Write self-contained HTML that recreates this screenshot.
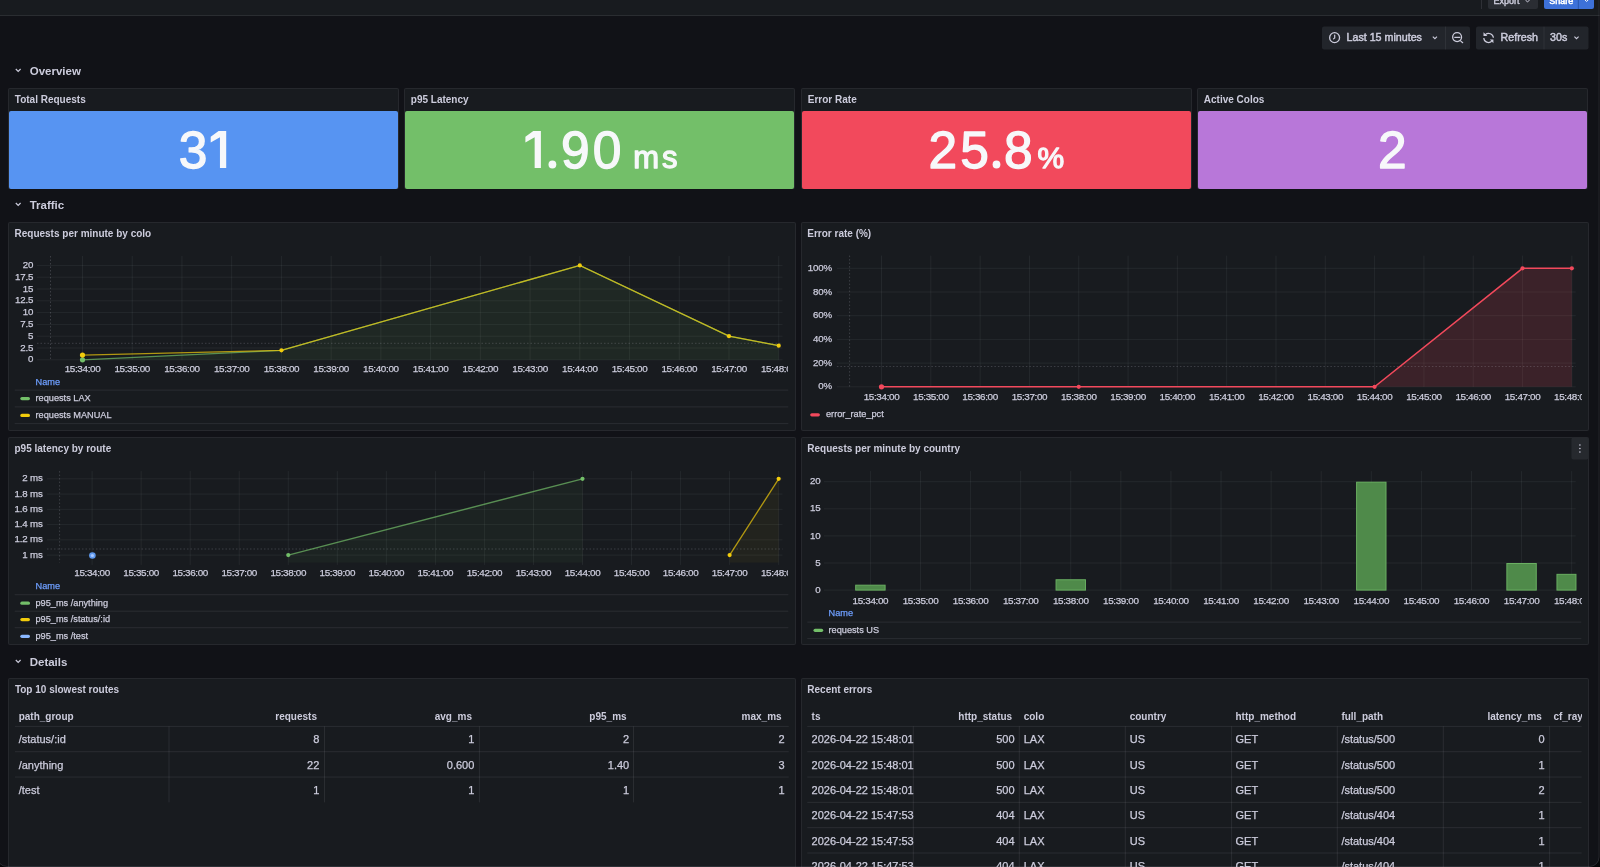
<!DOCTYPE html><html><head><meta charset="utf-8"><title>Grafana dashboard</title><style>

html,body{margin:0;padding:0;width:1600px;height:867px;overflow:hidden;background:#111217;font-family:"Liberation Sans", sans-serif;color:#ccccdc}
.panel{position:absolute;box-sizing:border-box;background:#181b1f;border:1px solid rgba(204,204,220,0.08);border-radius:2px}
svg{will-change:transform} svg text{font-family:"Liberation Sans", sans-serif}
.topbar{position:absolute;left:0;top:0;width:1600px;height:15px;background:#181b1f;border-bottom:1px solid rgba(204,204,220,0.10)}
.stat{position:absolute;box-sizing:border-box;border-radius:2px;overflow:hidden}

</style></head><body>
<div class="topbar"></div>
<svg style="position:absolute;left:0px;top:0px" width="1600" height="85" viewBox="0 0 1600 85">
<rect x="1481" y="0" width="1" height="9" fill="rgba(204,204,220,0.12)"/>
<rect x="1488" y="-4" width="50" height="13" rx="2" fill="#2a2d33"/>
<text x="1493.5" y="3.6" font-size="9" fill="#ccccdc" stroke="#ccccdc" stroke-width="0.4">Export</text>
<path d="M1525.3 -0.2 l2.2 2.2 l2.2 -2.2" stroke="#ccccdc" stroke-width="1" fill="none"/>
<rect x="1544" y="-4" width="50" height="13" rx="2" fill="#3d71d9"/>
<rect x="1577.8" y="-4" width="1.2" height="13" fill="#2c5ab5"/>
<text x="1549.3" y="3.6" font-size="9" fill="#ffffff" stroke="#ffffff" stroke-width="0.5">Share</text>
<path d="M1584.6 -0.5 l2 2 l2 -2" stroke="#ffffff" stroke-width="1" fill="none"/>
<rect x="1322" y="26.5" width="148" height="23" rx="2" fill="#22252b"/>
<rect x="1445" y="26.5" width="1" height="23" fill="rgba(204,204,220,0.08)"/>
<circle cx="1334.6" cy="37.65" r="4.95" stroke="#ccccdc" stroke-width="1.3" fill="none"/>
<path d="M1334.7 35 V37.9 L1333.5 38.9" stroke="#ccccdc" stroke-width="1.2" fill="none" stroke-linecap="round"/>
<text x="1346.5" y="41.2" font-size="10.7" fill="#ccccdc" stroke="#ccccdc" stroke-width="0.45">Last 15 minutes</text>
<path d="M1432.8 36.6 l2.1 2.1 l2.1 -2.1" stroke="#ccccdc" stroke-width="1.1" fill="none"/>
<circle cx="1457.1" cy="37.1" r="4.45" stroke="#ccccdc" stroke-width="1.3" fill="none"/>
<path d="M1454.8 37.4 h5 M1460.6 40.9 l2.1 1.8" stroke="#ccccdc" stroke-width="1.2" fill="none" stroke-linecap="round"/>
<rect x="1476" y="26.5" width="112.5" height="23" rx="2" fill="#22252b"/>
<rect x="1543.5" y="26.5" width="1" height="23" fill="rgba(204,204,220,0.08)"/>
<path d="M1485.4 34.6 A4.8 4.8 0 0 1 1493.4 37.8 M1483.8 37.9 A4.8 4.8 0 0 0 1491.8 41.3" stroke="#ccccdc" stroke-width="1.2" fill="none"/>
<path d="M1483.5 32.2 V36.1 H1487.4 Z M1493.4 43.3 V39.4 H1489.9 Z" fill="#ccccdc"/>
<text x="1500.5" y="41.2" font-size="10.7" fill="#ccccdc" stroke="#ccccdc" stroke-width="0.45">Refresh</text>
<text x="1550" y="41.2" font-size="10.7" fill="#ccccdc" stroke="#ccccdc" stroke-width="0.45">30s</text>
<path d="M1574.4 36.6 l2.1 2.1 l2.1 -2.1" stroke="#ccccdc" stroke-width="1.1" fill="none"/>
<path d="M15.8 69 l2.4 2.4 l2.4 -2.4" stroke="#ccccdc" stroke-width="1.2" fill="none"/>
<text x="29.7" y="74.9" font-size="11.5" font-weight="700" fill="#ccccdc">Overview</text>
</svg>
<div class="panel" style="left:8px;top:88px;width:391px;height:101px"></div>
<div class="stat" style="left:9px;top:110.5px;width:389px;height:78px;background:#5794f2"></div>
<div class="panel" style="left:404px;top:88px;width:391px;height:101px"></div>
<div class="stat" style="left:405px;top:110.5px;width:389px;height:78px;background:#73bf69"></div>
<div class="panel" style="left:801px;top:88px;width:391px;height:101px"></div>
<div class="stat" style="left:802px;top:110.5px;width:389px;height:78px;background:#f2495c"></div>
<div class="panel" style="left:1197px;top:88px;width:391px;height:101px"></div>
<div class="stat" style="left:1198px;top:110.5px;width:389px;height:78px;background:#b877d9"></div>
<svg style="position:absolute;left:0px;top:80px" width="1600" height="140" viewBox="0 80 1600 140">
<text x="14.8" y="103" font-size="10" font-weight="700" fill="#ccccdc">Total Requests</text>
<text x="410.8" y="103" font-size="10" font-weight="700" fill="#ccccdc">p95 Latency</text>
<text x="807.8" y="103" font-size="10" font-weight="700" fill="#ccccdc">Error Rate</text>
<text x="1203.8" y="103" font-size="10" font-weight="700" fill="#ccccdc">Active Colos</text>
<text x="178.69" y="167.6" font-size="51.5" fill="#f7f8fa" stroke="#f7f8fa" stroke-width="1.3" stroke-linejoin="round">3</text>
<polygon points="218.60,130.9 226.20,130.9 226.20,168.1 219.95,168.1 219.95,137.2 210.70,142.6 210.70,136.7" fill="#f7f8fa"/>
<polygon points="533.30,130.9 540.90,130.9 540.90,168.1 534.65,168.1 534.65,137.2 525.40,142.6 525.40,136.7" fill="#f7f8fa"/>
<text x="561.04 592.84" y="167.6" font-size="51.5" fill="#f7f8fa" stroke="#f7f8fa" stroke-width="1.3" stroke-linejoin="round">90</text>
<circle cx="552.4" cy="164.5" r="3.9" fill="#f7f8fa"/>
<text x="633.19 661.99" y="167.6" font-size="31" fill="#f7f8fa" stroke="#f7f8fa" stroke-width="1.3" stroke-linejoin="round">ms</text>
<text x="928.46 960.19 1004.01" y="167.6" font-size="51.5" fill="#f7f8fa" stroke="#f7f8fa" stroke-width="1.3" stroke-linejoin="round">258</text>
<circle cx="996.5" cy="164.5" r="3.9" fill="#f7f8fa"/>
<text x="1037.48" y="167.6" font-size="30" fill="#f7f8fa" stroke="#f7f8fa" stroke-width="1.3" stroke-linejoin="round">%</text>
<text x="1378.06" y="167.6" font-size="51.5" fill="#f7f8fa" stroke="#f7f8fa" stroke-width="1.3" stroke-linejoin="round">2</text>
<path d="M15.8 203 l2.4 2.4 l2.4 -2.4" stroke="#ccccdc" stroke-width="1.2" fill="none"/>
<text x="29.7" y="208.5" font-size="11.5" font-weight="700" fill="#ccccdc">Traffic</text>
</svg>
<div class="panel" style="left:8px;top:222px;width:787.5px;height:209px"></div>
<svg style="position:absolute;left:8px;top:222px" width="787.5" height="209" viewBox="8 222 787.5 209">
<text x="14.5" y="237" font-size="10" font-weight="700" fill="#ccccdc">Requests per minute by colo</text>
<rect x="37" y="359.3" width="745.5" height="1" fill="rgba(240,250,255,0.06)"/>
<text x="33.3" y="362.4" font-size="9.7" text-anchor="end" letter-spacing="-0.15" fill="#ccccdc" stroke="#ccccdc" stroke-width="0.25">0</text>
<rect x="37" y="347.5" width="745.5" height="1" fill="rgba(240,250,255,0.06)"/>
<text x="33.3" y="350.6" font-size="9.7" text-anchor="end" letter-spacing="-0.15" fill="#ccccdc" stroke="#ccccdc" stroke-width="0.25">2.5</text>
<rect x="37" y="335.7" width="745.5" height="1" fill="rgba(240,250,255,0.06)"/>
<text x="33.3" y="338.8" font-size="9.7" text-anchor="end" letter-spacing="-0.15" fill="#ccccdc" stroke="#ccccdc" stroke-width="0.25">5</text>
<rect x="37" y="323.9" width="745.5" height="1" fill="rgba(240,250,255,0.06)"/>
<text x="33.3" y="327.0" font-size="9.7" text-anchor="end" letter-spacing="-0.15" fill="#ccccdc" stroke="#ccccdc" stroke-width="0.25">7.5</text>
<rect x="37" y="312.1" width="745.5" height="1" fill="rgba(240,250,255,0.06)"/>
<text x="33.3" y="315.2" font-size="9.7" text-anchor="end" letter-spacing="-0.15" fill="#ccccdc" stroke="#ccccdc" stroke-width="0.25">10</text>
<rect x="37" y="300.3" width="745.5" height="1" fill="rgba(240,250,255,0.06)"/>
<text x="33.3" y="303.4" font-size="9.7" text-anchor="end" letter-spacing="-0.15" fill="#ccccdc" stroke="#ccccdc" stroke-width="0.25">12.5</text>
<rect x="37" y="288.5" width="745.5" height="1" fill="rgba(240,250,255,0.06)"/>
<text x="33.3" y="291.6" font-size="9.7" text-anchor="end" letter-spacing="-0.15" fill="#ccccdc" stroke="#ccccdc" stroke-width="0.25">15</text>
<rect x="37" y="276.7" width="745.5" height="1" fill="rgba(240,250,255,0.06)"/>
<text x="33.3" y="279.8" font-size="9.7" text-anchor="end" letter-spacing="-0.15" fill="#ccccdc" stroke="#ccccdc" stroke-width="0.25">17.5</text>
<rect x="37" y="264.9" width="745.5" height="1" fill="rgba(240,250,255,0.06)"/>
<text x="33.3" y="268.0" font-size="9.7" text-anchor="end" letter-spacing="-0.15" fill="#ccccdc" stroke="#ccccdc" stroke-width="0.25">20</text>
<rect x="82.0" y="256" width="1" height="103.80000000000001" fill="rgba(240,250,255,0.06)"/>
<rect x="131.73" y="256" width="1" height="103.80000000000001" fill="rgba(240,250,255,0.06)"/>
<rect x="181.45999999999998" y="256" width="1" height="103.80000000000001" fill="rgba(240,250,255,0.06)"/>
<rect x="231.19" y="256" width="1" height="103.80000000000001" fill="rgba(240,250,255,0.06)"/>
<rect x="280.91999999999996" y="256" width="1" height="103.80000000000001" fill="rgba(240,250,255,0.06)"/>
<rect x="330.65" y="256" width="1" height="103.80000000000001" fill="rgba(240,250,255,0.06)"/>
<rect x="380.38" y="256" width="1" height="103.80000000000001" fill="rgba(240,250,255,0.06)"/>
<rect x="430.10999999999996" y="256" width="1" height="103.80000000000001" fill="rgba(240,250,255,0.06)"/>
<rect x="479.84" y="256" width="1" height="103.80000000000001" fill="rgba(240,250,255,0.06)"/>
<rect x="529.5699999999999" y="256" width="1" height="103.80000000000001" fill="rgba(240,250,255,0.06)"/>
<rect x="579.3" y="256" width="1" height="103.80000000000001" fill="rgba(240,250,255,0.06)"/>
<rect x="629.03" y="256" width="1" height="103.80000000000001" fill="rgba(240,250,255,0.06)"/>
<rect x="678.76" y="256" width="1" height="103.80000000000001" fill="rgba(240,250,255,0.06)"/>
<rect x="728.49" y="256" width="1" height="103.80000000000001" fill="rgba(240,250,255,0.06)"/>
<rect x="778.2199999999999" y="256" width="1" height="103.80000000000001" fill="rgba(240,250,255,0.06)"/>
<polygon points="82.50,359.8 82.50,359.80 281.42,350.36 579.80,265.40 728.99,336.20 778.72,345.64 778.72,359.8" fill="#73bf69" fill-opacity="0.085"/>
<polygon points="82.50,359.8 82.50,355.08 281.42,350.36 579.80,265.40 728.99,336.20 778.72,345.64 778.72,359.8" fill="#f2cc0c" fill-opacity="0.005"/>
<path d="M50.5 256 V359.8" stroke="rgba(204,204,220,0.2)" stroke-width="1" stroke-dasharray="1.5 2" fill="none"/><path d="M37 343.3 H782.5" stroke="rgba(204,204,220,0.2)" stroke-width="1" stroke-dasharray="1.5 2" fill="none"/>
<polyline points="82.50,359.80 281.42,350.36 579.80,265.40 728.99,336.20 778.72,345.64" stroke="#73bf69" stroke-width="1.3" stroke-opacity="0.7" fill="none"/>
<polyline points="82.50,355.08 281.42,350.36 579.80,265.40 728.99,336.20 778.72,345.64" stroke="#f2cc0c" stroke-width="1.3" stroke-opacity="0.7" fill="none"/>
<circle cx="82.5" cy="359.80" r="2.6" fill="#73bf69"/>
<circle cx="82.5" cy="355.08" r="2.6" fill="#f2cc0c"/>
<circle cx="281.42" cy="350.36" r="2.1" fill="#f2cc0c"/>
<circle cx="579.80" cy="265.40" r="2.1" fill="#f2cc0c"/>
<circle cx="728.99" cy="336.20" r="2.1" fill="#f2cc0c"/>
<circle cx="778.72" cy="345.64" r="2.1" fill="#f2cc0c"/>
<clipPath id="cl1"><rect x="0" y="0" width="788" height="2000"/></clipPath>
<g clip-path="url(#cl1)">
<text x="82.5" y="372.3" font-size="9.9" text-anchor="middle" letter-spacing="-0.36" fill="#ccccdc" stroke="#ccccdc" stroke-width="0.25">15:34:00</text>
<text x="132.23" y="372.3" font-size="9.9" text-anchor="middle" letter-spacing="-0.36" fill="#ccccdc" stroke="#ccccdc" stroke-width="0.25">15:35:00</text>
<text x="181.96" y="372.3" font-size="9.9" text-anchor="middle" letter-spacing="-0.36" fill="#ccccdc" stroke="#ccccdc" stroke-width="0.25">15:36:00</text>
<text x="231.69" y="372.3" font-size="9.9" text-anchor="middle" letter-spacing="-0.36" fill="#ccccdc" stroke="#ccccdc" stroke-width="0.25">15:37:00</text>
<text x="281.42" y="372.3" font-size="9.9" text-anchor="middle" letter-spacing="-0.36" fill="#ccccdc" stroke="#ccccdc" stroke-width="0.25">15:38:00</text>
<text x="331.15" y="372.3" font-size="9.9" text-anchor="middle" letter-spacing="-0.36" fill="#ccccdc" stroke="#ccccdc" stroke-width="0.25">15:39:00</text>
<text x="380.88" y="372.3" font-size="9.9" text-anchor="middle" letter-spacing="-0.36" fill="#ccccdc" stroke="#ccccdc" stroke-width="0.25">15:40:00</text>
<text x="430.61" y="372.3" font-size="9.9" text-anchor="middle" letter-spacing="-0.36" fill="#ccccdc" stroke="#ccccdc" stroke-width="0.25">15:41:00</text>
<text x="480.34" y="372.3" font-size="9.9" text-anchor="middle" letter-spacing="-0.36" fill="#ccccdc" stroke="#ccccdc" stroke-width="0.25">15:42:00</text>
<text x="530.07" y="372.3" font-size="9.9" text-anchor="middle" letter-spacing="-0.36" fill="#ccccdc" stroke="#ccccdc" stroke-width="0.25">15:43:00</text>
<text x="579.8" y="372.3" font-size="9.9" text-anchor="middle" letter-spacing="-0.36" fill="#ccccdc" stroke="#ccccdc" stroke-width="0.25">15:44:00</text>
<text x="629.53" y="372.3" font-size="9.9" text-anchor="middle" letter-spacing="-0.36" fill="#ccccdc" stroke="#ccccdc" stroke-width="0.25">15:45:00</text>
<text x="679.26" y="372.3" font-size="9.9" text-anchor="middle" letter-spacing="-0.36" fill="#ccccdc" stroke="#ccccdc" stroke-width="0.25">15:46:00</text>
<text x="728.99" y="372.3" font-size="9.9" text-anchor="middle" letter-spacing="-0.36" fill="#ccccdc" stroke="#ccccdc" stroke-width="0.25">15:47:00</text>
<text x="778.72" y="372.3" font-size="9.9" text-anchor="middle" letter-spacing="-0.36" fill="#ccccdc" stroke="#ccccdc" stroke-width="0.25">15:48:00</text>
</g>
<text x="35.5" y="384.8" font-size="9.2" fill="#6e9fff" stroke="#6e9fff" stroke-width="0.25">Name</text>
<rect x="14.7" y="389.6" width="773.5999999999999" height="1" fill="rgba(204,204,220,0.10)"/>
<rect x="14.7" y="406.4" width="773.5999999999999" height="1" fill="rgba(204,204,220,0.10)"/>
<rect x="14.7" y="423.1" width="773.5999999999999" height="1" fill="rgba(204,204,220,0.10)"/>
<rect x="20.3" y="397.0" width="9.7" height="3.2" rx="1.6" fill="#73bf69"/>
<text x="35.5" y="401.0" font-size="9.2" fill="#ccccdc" stroke="#ccccdc" stroke-width="0.25">requests LAX</text>
<rect x="20.3" y="413.8" width="9.7" height="3.2" rx="1.6" fill="#f2cc0c"/>
<text x="35.5" y="417.8" font-size="9.2" fill="#ccccdc" stroke="#ccccdc" stroke-width="0.25">requests MANUAL</text>
</svg>
<div class="panel" style="left:801px;top:222px;width:787.5px;height:209px"></div>
<svg style="position:absolute;left:801px;top:222px" width="787.5" height="209" viewBox="801 222 787.5 209">
<text x="807.3" y="237" font-size="10" font-weight="700" fill="#ccccdc">Error rate (%)</text>
<rect x="836.9" y="386.3" width="738.8000000000001" height="1" fill="rgba(240,250,255,0.06)"/>
<text x="832" y="389.4" font-size="9.7" text-anchor="end" letter-spacing="-0.15" fill="#ccccdc" stroke="#ccccdc" stroke-width="0.25">0%</text>
<rect x="836.9" y="362.6" width="738.8000000000001" height="1" fill="rgba(240,250,255,0.06)"/>
<text x="832" y="365.7" font-size="9.7" text-anchor="end" letter-spacing="-0.15" fill="#ccccdc" stroke="#ccccdc" stroke-width="0.25">20%</text>
<rect x="836.9" y="338.90000000000003" width="738.8000000000001" height="1" fill="rgba(240,250,255,0.06)"/>
<text x="832" y="342.0" font-size="9.7" text-anchor="end" letter-spacing="-0.15" fill="#ccccdc" stroke="#ccccdc" stroke-width="0.25">40%</text>
<rect x="836.9" y="315.20000000000005" width="738.8000000000001" height="1" fill="rgba(240,250,255,0.06)"/>
<text x="832" y="318.3" font-size="9.7" text-anchor="end" letter-spacing="-0.15" fill="#ccccdc" stroke="#ccccdc" stroke-width="0.25">60%</text>
<rect x="836.9" y="291.5" width="738.8000000000001" height="1" fill="rgba(240,250,255,0.06)"/>
<text x="832" y="294.6" font-size="9.7" text-anchor="end" letter-spacing="-0.15" fill="#ccccdc" stroke="#ccccdc" stroke-width="0.25">80%</text>
<rect x="836.9" y="267.8" width="738.8000000000001" height="1" fill="rgba(240,250,255,0.06)"/>
<text x="832" y="270.9" font-size="9.7" text-anchor="end" letter-spacing="-0.15" fill="#ccccdc" stroke="#ccccdc" stroke-width="0.25">100%</text>
<rect x="881.0" y="255.6" width="1" height="131.20000000000002" fill="rgba(240,250,255,0.06)"/>
<rect x="930.31" y="255.6" width="1" height="131.20000000000002" fill="rgba(240,250,255,0.06)"/>
<rect x="979.62" y="255.6" width="1" height="131.20000000000002" fill="rgba(240,250,255,0.06)"/>
<rect x="1028.93" y="255.6" width="1" height="131.20000000000002" fill="rgba(240,250,255,0.06)"/>
<rect x="1078.24" y="255.6" width="1" height="131.20000000000002" fill="rgba(240,250,255,0.06)"/>
<rect x="1127.55" y="255.6" width="1" height="131.20000000000002" fill="rgba(240,250,255,0.06)"/>
<rect x="1176.8600000000001" y="255.6" width="1" height="131.20000000000002" fill="rgba(240,250,255,0.06)"/>
<rect x="1226.17" y="255.6" width="1" height="131.20000000000002" fill="rgba(240,250,255,0.06)"/>
<rect x="1275.48" y="255.6" width="1" height="131.20000000000002" fill="rgba(240,250,255,0.06)"/>
<rect x="1324.79" y="255.6" width="1" height="131.20000000000002" fill="rgba(240,250,255,0.06)"/>
<rect x="1374.1" y="255.6" width="1" height="131.20000000000002" fill="rgba(240,250,255,0.06)"/>
<rect x="1423.41" y="255.6" width="1" height="131.20000000000002" fill="rgba(240,250,255,0.06)"/>
<rect x="1472.72" y="255.6" width="1" height="131.20000000000002" fill="rgba(240,250,255,0.06)"/>
<rect x="1522.03" y="255.6" width="1" height="131.20000000000002" fill="rgba(240,250,255,0.06)"/>
<rect x="1571.3400000000001" y="255.6" width="1" height="131.20000000000002" fill="rgba(240,250,255,0.06)"/>
<polygon points="881.50,386.8 881.50,386.80 1078.74,386.80 1374.60,386.80 1522.53,268.30 1571.84,268.30 1571.84,386.8" fill="#f2495c" fill-opacity="0.16"/>
<path d="M849.6 255.6 V386.8" stroke="rgba(204,204,220,0.2)" stroke-width="1" stroke-dasharray="1.5 2" fill="none"/><path d="M836.9 366.5 H1575.7" stroke="rgba(204,204,220,0.2)" stroke-width="1" stroke-dasharray="1.5 2" fill="none"/>
<polyline points="881.50,386.80 1078.74,386.80 1374.60,386.80 1522.53,268.30 1571.84,268.30" stroke="#f2495c" stroke-width="1.5" fill="none"/>
<circle cx="881.50" cy="386.80" r="2.6" fill="#f2495c"/>
<circle cx="1078.74" cy="386.80" r="2.1" fill="#f2495c"/>
<circle cx="1374.60" cy="386.80" r="2.1" fill="#f2495c"/>
<circle cx="1522.53" cy="268.30" r="2.1" fill="#f2495c"/>
<circle cx="1571.84" cy="268.30" r="2.1" fill="#f2495c"/>
<clipPath id="cl2"><rect x="0" y="0" width="1582" height="2000"/></clipPath>
<g clip-path="url(#cl2)">
<text x="881.5" y="400.0" font-size="9.9" text-anchor="middle" letter-spacing="-0.36" fill="#ccccdc" stroke="#ccccdc" stroke-width="0.25">15:34:00</text>
<text x="930.81" y="400.0" font-size="9.9" text-anchor="middle" letter-spacing="-0.36" fill="#ccccdc" stroke="#ccccdc" stroke-width="0.25">15:35:00</text>
<text x="980.12" y="400.0" font-size="9.9" text-anchor="middle" letter-spacing="-0.36" fill="#ccccdc" stroke="#ccccdc" stroke-width="0.25">15:36:00</text>
<text x="1029.43" y="400.0" font-size="9.9" text-anchor="middle" letter-spacing="-0.36" fill="#ccccdc" stroke="#ccccdc" stroke-width="0.25">15:37:00</text>
<text x="1078.74" y="400.0" font-size="9.9" text-anchor="middle" letter-spacing="-0.36" fill="#ccccdc" stroke="#ccccdc" stroke-width="0.25">15:38:00</text>
<text x="1128.05" y="400.0" font-size="9.9" text-anchor="middle" letter-spacing="-0.36" fill="#ccccdc" stroke="#ccccdc" stroke-width="0.25">15:39:00</text>
<text x="1177.36" y="400.0" font-size="9.9" text-anchor="middle" letter-spacing="-0.36" fill="#ccccdc" stroke="#ccccdc" stroke-width="0.25">15:40:00</text>
<text x="1226.67" y="400.0" font-size="9.9" text-anchor="middle" letter-spacing="-0.36" fill="#ccccdc" stroke="#ccccdc" stroke-width="0.25">15:41:00</text>
<text x="1275.98" y="400.0" font-size="9.9" text-anchor="middle" letter-spacing="-0.36" fill="#ccccdc" stroke="#ccccdc" stroke-width="0.25">15:42:00</text>
<text x="1325.29" y="400.0" font-size="9.9" text-anchor="middle" letter-spacing="-0.36" fill="#ccccdc" stroke="#ccccdc" stroke-width="0.25">15:43:00</text>
<text x="1374.6" y="400.0" font-size="9.9" text-anchor="middle" letter-spacing="-0.36" fill="#ccccdc" stroke="#ccccdc" stroke-width="0.25">15:44:00</text>
<text x="1423.91" y="400.0" font-size="9.9" text-anchor="middle" letter-spacing="-0.36" fill="#ccccdc" stroke="#ccccdc" stroke-width="0.25">15:45:00</text>
<text x="1473.22" y="400.0" font-size="9.9" text-anchor="middle" letter-spacing="-0.36" fill="#ccccdc" stroke="#ccccdc" stroke-width="0.25">15:46:00</text>
<text x="1522.53" y="400.0" font-size="9.9" text-anchor="middle" letter-spacing="-0.36" fill="#ccccdc" stroke="#ccccdc" stroke-width="0.25">15:47:00</text>
<text x="1571.84" y="400.0" font-size="9.9" text-anchor="middle" letter-spacing="-0.36" fill="#ccccdc" stroke="#ccccdc" stroke-width="0.25">15:48:00</text>
</g>
<rect x="810.2" y="413.2" width="9.7" height="3.2" rx="1.6" fill="#f2495c"/>
<text x="826" y="417.2" font-size="9.2" fill="#ccccdc" stroke="#ccccdc" stroke-width="0.25">error_rate_pct</text>
</svg>
<div class="panel" style="left:8px;top:436.5px;width:787.5px;height:208.5px"></div>
<svg style="position:absolute;left:8px;top:436.5px" width="787.5" height="209" viewBox="8 436.5 787.5 209">
<text x="14.5" y="451.8" font-size="10" font-weight="700" fill="#ccccdc">p95 latency by route</text>
<rect x="47" y="554.1" width="735.5" height="1" fill="rgba(240,250,255,0.06)"/>
<text x="42.6" y="557.2" font-size="9.7" text-anchor="end" letter-spacing="-0.15" fill="#ccccdc" stroke="#ccccdc" stroke-width="0.25">1 ms</text>
<rect x="47" y="538.84" width="735.5" height="1" fill="rgba(240,250,255,0.06)"/>
<text x="42.6" y="541.94" font-size="9.7" text-anchor="end" letter-spacing="-0.15" fill="#ccccdc" stroke="#ccccdc" stroke-width="0.25">1.2 ms</text>
<rect x="47" y="523.58" width="735.5" height="1" fill="rgba(240,250,255,0.06)"/>
<text x="42.6" y="526.68" font-size="9.7" text-anchor="end" letter-spacing="-0.15" fill="#ccccdc" stroke="#ccccdc" stroke-width="0.25">1.4 ms</text>
<rect x="47" y="508.32000000000005" width="735.5" height="1" fill="rgba(240,250,255,0.06)"/>
<text x="42.6" y="511.42" font-size="9.7" text-anchor="end" letter-spacing="-0.15" fill="#ccccdc" stroke="#ccccdc" stroke-width="0.25">1.6 ms</text>
<rect x="47" y="493.06" width="735.5" height="1" fill="rgba(240,250,255,0.06)"/>
<text x="42.6" y="496.16" font-size="9.7" text-anchor="end" letter-spacing="-0.15" fill="#ccccdc" stroke="#ccccdc" stroke-width="0.25">1.8 ms</text>
<rect x="47" y="477.8" width="735.5" height="1" fill="rgba(240,250,255,0.06)"/>
<text x="42.6" y="480.9" font-size="9.7" text-anchor="end" letter-spacing="-0.15" fill="#ccccdc" stroke="#ccccdc" stroke-width="0.25">2 ms</text>
<rect x="91.6" y="470.6" width="1" height="93.79999999999995" fill="rgba(240,250,255,0.06)"/>
<rect x="140.64" y="470.6" width="1" height="93.79999999999995" fill="rgba(240,250,255,0.06)"/>
<rect x="189.68" y="470.6" width="1" height="93.79999999999995" fill="rgba(240,250,255,0.06)"/>
<rect x="238.72" y="470.6" width="1" height="93.79999999999995" fill="rgba(240,250,255,0.06)"/>
<rect x="287.76" y="470.6" width="1" height="93.79999999999995" fill="rgba(240,250,255,0.06)"/>
<rect x="336.79999999999995" y="470.6" width="1" height="93.79999999999995" fill="rgba(240,250,255,0.06)"/>
<rect x="385.84000000000003" y="470.6" width="1" height="93.79999999999995" fill="rgba(240,250,255,0.06)"/>
<rect x="434.88" y="470.6" width="1" height="93.79999999999995" fill="rgba(240,250,255,0.06)"/>
<rect x="483.91999999999996" y="470.6" width="1" height="93.79999999999995" fill="rgba(240,250,255,0.06)"/>
<rect x="532.96" y="470.6" width="1" height="93.79999999999995" fill="rgba(240,250,255,0.06)"/>
<rect x="582.0" y="470.6" width="1" height="93.79999999999995" fill="rgba(240,250,255,0.06)"/>
<rect x="631.04" y="470.6" width="1" height="93.79999999999995" fill="rgba(240,250,255,0.06)"/>
<rect x="680.08" y="470.6" width="1" height="93.79999999999995" fill="rgba(240,250,255,0.06)"/>
<rect x="729.12" y="470.6" width="1" height="93.79999999999995" fill="rgba(240,250,255,0.06)"/>
<rect x="778.16" y="470.6" width="1" height="93.79999999999995" fill="rgba(240,250,255,0.06)"/>
<polygon points="288.26,562 288.26,554.60 582.50,478.30 582.50,562" fill="#73bf69" fill-opacity="0.05"/>
<polygon points="729.62,562 729.62,554.60 778.66,478.30 778.66,562" fill="#f2cc0c" fill-opacity="0.05"/>
<path d="M59.6 470.6 V562" stroke="rgba(204,204,220,0.2)" stroke-width="1" stroke-dasharray="1.5 2" fill="none"/><path d="M47 548.5 H782.5" stroke="rgba(204,204,220,0.2)" stroke-width="1" stroke-dasharray="1.5 2" fill="none"/>
<polyline points="288.26,554.60 582.50,478.30" stroke="#73bf69" stroke-width="1.3" stroke-opacity="0.7" fill="none"/>
<polyline points="729.62,554.60 778.66,478.30" stroke="#f2cc0c" stroke-width="1.3" stroke-opacity="0.7" fill="none"/>
<circle cx="92.40" cy="555.00" r="3.3" fill="#5f9af0"/>
<circle cx="92.40" cy="555.00" r="1.6" fill="#a8c8ff"/>
<circle cx="288.26" cy="554.60" r="2.1" fill="#73bf69"/>
<circle cx="582.50" cy="478.30" r="2.1" fill="#73bf69"/>
<circle cx="729.62" cy="554.60" r="2.1" fill="#f2cc0c"/>
<circle cx="778.66" cy="478.30" r="2.1" fill="#f2cc0c"/>
<clipPath id="cl3"><rect x="0" y="0" width="788" height="2000"/></clipPath>
<g clip-path="url(#cl3)">
<text x="92.1" y="575.4" font-size="9.9" text-anchor="middle" letter-spacing="-0.36" fill="#ccccdc" stroke="#ccccdc" stroke-width="0.25">15:34:00</text>
<text x="141.14" y="575.4" font-size="9.9" text-anchor="middle" letter-spacing="-0.36" fill="#ccccdc" stroke="#ccccdc" stroke-width="0.25">15:35:00</text>
<text x="190.18" y="575.4" font-size="9.9" text-anchor="middle" letter-spacing="-0.36" fill="#ccccdc" stroke="#ccccdc" stroke-width="0.25">15:36:00</text>
<text x="239.22" y="575.4" font-size="9.9" text-anchor="middle" letter-spacing="-0.36" fill="#ccccdc" stroke="#ccccdc" stroke-width="0.25">15:37:00</text>
<text x="288.26" y="575.4" font-size="9.9" text-anchor="middle" letter-spacing="-0.36" fill="#ccccdc" stroke="#ccccdc" stroke-width="0.25">15:38:00</text>
<text x="337.3" y="575.4" font-size="9.9" text-anchor="middle" letter-spacing="-0.36" fill="#ccccdc" stroke="#ccccdc" stroke-width="0.25">15:39:00</text>
<text x="386.34" y="575.4" font-size="9.9" text-anchor="middle" letter-spacing="-0.36" fill="#ccccdc" stroke="#ccccdc" stroke-width="0.25">15:40:00</text>
<text x="435.38" y="575.4" font-size="9.9" text-anchor="middle" letter-spacing="-0.36" fill="#ccccdc" stroke="#ccccdc" stroke-width="0.25">15:41:00</text>
<text x="484.42" y="575.4" font-size="9.9" text-anchor="middle" letter-spacing="-0.36" fill="#ccccdc" stroke="#ccccdc" stroke-width="0.25">15:42:00</text>
<text x="533.46" y="575.4" font-size="9.9" text-anchor="middle" letter-spacing="-0.36" fill="#ccccdc" stroke="#ccccdc" stroke-width="0.25">15:43:00</text>
<text x="582.5" y="575.4" font-size="9.9" text-anchor="middle" letter-spacing="-0.36" fill="#ccccdc" stroke="#ccccdc" stroke-width="0.25">15:44:00</text>
<text x="631.54" y="575.4" font-size="9.9" text-anchor="middle" letter-spacing="-0.36" fill="#ccccdc" stroke="#ccccdc" stroke-width="0.25">15:45:00</text>
<text x="680.58" y="575.4" font-size="9.9" text-anchor="middle" letter-spacing="-0.36" fill="#ccccdc" stroke="#ccccdc" stroke-width="0.25">15:46:00</text>
<text x="729.62" y="575.4" font-size="9.9" text-anchor="middle" letter-spacing="-0.36" fill="#ccccdc" stroke="#ccccdc" stroke-width="0.25">15:47:00</text>
<text x="778.66" y="575.4" font-size="9.9" text-anchor="middle" letter-spacing="-0.36" fill="#ccccdc" stroke="#ccccdc" stroke-width="0.25">15:48:00</text>
</g>
<text x="35.5" y="588.0" font-size="9.2" fill="#6e9fff" stroke="#6e9fff" stroke-width="0.25">Name</text>
<rect x="14.7" y="593.7" width="773.5999999999999" height="1" fill="rgba(204,204,220,0.10)"/>
<rect x="14.7" y="610.2" width="773.5999999999999" height="1" fill="rgba(204,204,220,0.10)"/>
<rect x="14.7" y="626.7" width="773.5999999999999" height="1" fill="rgba(204,204,220,0.10)"/>
<rect x="20.3" y="601.1" width="9.7" height="3.2" rx="1.6" fill="#73bf69"/>
<text x="35.5" y="605.1" font-size="9.2" fill="#ccccdc" stroke="#ccccdc" stroke-width="0.25">p95_ms /anything</text>
<rect x="20.3" y="617.5" width="9.7" height="3.2" rx="1.6" fill="#f2cc0c"/>
<text x="35.5" y="621.5" font-size="9.2" fill="#ccccdc" stroke="#ccccdc" stroke-width="0.25">p95_ms /status/:id</text>
<clipPath id="lg3"><rect x="0" y="0" width="1600" height="640.4"/></clipPath><g clip-path="url(#lg3)">
<rect x="20.3" y="634.2" width="9.7" height="3.2" rx="1.6" fill="#8ab8ff"/>
<text x="35.5" y="638.2" font-size="9.2" fill="#ccccdc" stroke="#ccccdc" stroke-width="0.25">p95_ms /test</text>
</g>
</svg>
<div class="panel" style="left:801px;top:436.5px;width:787.5px;height:208.5px"></div>
<svg style="position:absolute;left:801px;top:436.5px" width="787.5" height="209" viewBox="801 436.5 787.5 209">
<text x="807.3" y="451.8" font-size="10" font-weight="700" fill="#ccccdc">Requests per minute by country</text>
<rect x="824" y="589.1" width="751.7" height="1" fill="rgba(240,250,255,0.06)"/>
<text x="820.4" y="592.2" font-size="9.7" text-anchor="end" letter-spacing="-0.15" fill="#ccccdc" stroke="#ccccdc" stroke-width="0.25">0</text>
<rect x="824" y="562.0" width="751.7" height="1" fill="rgba(240,250,255,0.06)"/>
<text x="820.4" y="565.1" font-size="9.7" text-anchor="end" letter-spacing="-0.15" fill="#ccccdc" stroke="#ccccdc" stroke-width="0.25">5</text>
<rect x="824" y="534.9" width="751.7" height="1" fill="rgba(240,250,255,0.06)"/>
<text x="820.4" y="538.0" font-size="9.7" text-anchor="end" letter-spacing="-0.15" fill="#ccccdc" stroke="#ccccdc" stroke-width="0.25">10</text>
<rect x="824" y="507.8" width="751.7" height="1" fill="rgba(240,250,255,0.06)"/>
<text x="820.4" y="510.9" font-size="9.7" text-anchor="end" letter-spacing="-0.15" fill="#ccccdc" stroke="#ccccdc" stroke-width="0.25">15</text>
<rect x="824" y="480.70000000000005" width="751.7" height="1" fill="rgba(240,250,255,0.06)"/>
<text x="820.4" y="483.8" font-size="9.7" text-anchor="end" letter-spacing="-0.15" fill="#ccccdc" stroke="#ccccdc" stroke-width="0.25">20</text>
<rect x="869.9" y="470.6" width="1" height="119.19999999999993" fill="rgba(240,250,255,0.06)"/>
<rect x="919.99" y="470.6" width="1" height="119.19999999999993" fill="rgba(240,250,255,0.06)"/>
<rect x="970.0799999999999" y="470.6" width="1" height="119.19999999999993" fill="rgba(240,250,255,0.06)"/>
<rect x="1020.17" y="470.6" width="1" height="119.19999999999993" fill="rgba(240,250,255,0.06)"/>
<rect x="1070.26" y="470.6" width="1" height="119.19999999999993" fill="rgba(240,250,255,0.06)"/>
<rect x="1120.35" y="470.6" width="1" height="119.19999999999993" fill="rgba(240,250,255,0.06)"/>
<rect x="1170.44" y="470.6" width="1" height="119.19999999999993" fill="rgba(240,250,255,0.06)"/>
<rect x="1220.53" y="470.6" width="1" height="119.19999999999993" fill="rgba(240,250,255,0.06)"/>
<rect x="1270.62" y="470.6" width="1" height="119.19999999999993" fill="rgba(240,250,255,0.06)"/>
<rect x="1320.71" y="470.6" width="1" height="119.19999999999993" fill="rgba(240,250,255,0.06)"/>
<rect x="1370.8" y="470.6" width="1" height="119.19999999999993" fill="rgba(240,250,255,0.06)"/>
<rect x="1420.8899999999999" y="470.6" width="1" height="119.19999999999993" fill="rgba(240,250,255,0.06)"/>
<rect x="1470.98" y="470.6" width="1" height="119.19999999999993" fill="rgba(240,250,255,0.06)"/>
<rect x="1521.0700000000002" y="470.6" width="1" height="119.19999999999993" fill="rgba(240,250,255,0.06)"/>
<rect x="1571.1599999999999" y="470.6" width="1" height="119.19999999999993" fill="rgba(240,250,255,0.06)"/>
<rect x="855.70" y="584.68" width="29.40" height="4.92" fill="#4f8a4a" stroke="#6aaf62" stroke-width="1"/>
<rect x="1056.06" y="579.26" width="29.40" height="10.34" fill="#4f8a4a" stroke="#6aaf62" stroke-width="1"/>
<rect x="1356.60" y="481.70" width="29.40" height="107.90" fill="#4f8a4a" stroke="#6aaf62" stroke-width="1"/>
<rect x="1506.87" y="563.00" width="29.40" height="26.60" fill="#4f8a4a" stroke="#6aaf62" stroke-width="1"/>
<rect x="1556.96" y="573.84" width="19.00" height="15.76" fill="#4f8a4a" stroke="#6aaf62" stroke-width="1"/>
<rect x="1571.4" y="437.1" width="17" height="22" rx="2" fill="#26292e"/>
<circle cx="1579.9" cy="444.5" r="0.8" fill="#ccccdc"/><circle cx="1579.9" cy="448" r="0.8" fill="#ccccdc"/><circle cx="1579.9" cy="451.5" r="0.8" fill="#ccccdc"/>
<clipPath id="cl4"><rect x="0" y="0" width="1582" height="2000"/></clipPath>
<g clip-path="url(#cl4)">
<text x="870.4" y="603.1" font-size="9.9" text-anchor="middle" letter-spacing="-0.36" fill="#ccccdc" stroke="#ccccdc" stroke-width="0.25">15:34:00</text>
<text x="920.49" y="603.1" font-size="9.9" text-anchor="middle" letter-spacing="-0.36" fill="#ccccdc" stroke="#ccccdc" stroke-width="0.25">15:35:00</text>
<text x="970.58" y="603.1" font-size="9.9" text-anchor="middle" letter-spacing="-0.36" fill="#ccccdc" stroke="#ccccdc" stroke-width="0.25">15:36:00</text>
<text x="1020.67" y="603.1" font-size="9.9" text-anchor="middle" letter-spacing="-0.36" fill="#ccccdc" stroke="#ccccdc" stroke-width="0.25">15:37:00</text>
<text x="1070.76" y="603.1" font-size="9.9" text-anchor="middle" letter-spacing="-0.36" fill="#ccccdc" stroke="#ccccdc" stroke-width="0.25">15:38:00</text>
<text x="1120.85" y="603.1" font-size="9.9" text-anchor="middle" letter-spacing="-0.36" fill="#ccccdc" stroke="#ccccdc" stroke-width="0.25">15:39:00</text>
<text x="1170.94" y="603.1" font-size="9.9" text-anchor="middle" letter-spacing="-0.36" fill="#ccccdc" stroke="#ccccdc" stroke-width="0.25">15:40:00</text>
<text x="1221.03" y="603.1" font-size="9.9" text-anchor="middle" letter-spacing="-0.36" fill="#ccccdc" stroke="#ccccdc" stroke-width="0.25">15:41:00</text>
<text x="1271.12" y="603.1" font-size="9.9" text-anchor="middle" letter-spacing="-0.36" fill="#ccccdc" stroke="#ccccdc" stroke-width="0.25">15:42:00</text>
<text x="1321.21" y="603.1" font-size="9.9" text-anchor="middle" letter-spacing="-0.36" fill="#ccccdc" stroke="#ccccdc" stroke-width="0.25">15:43:00</text>
<text x="1371.3" y="603.1" font-size="9.9" text-anchor="middle" letter-spacing="-0.36" fill="#ccccdc" stroke="#ccccdc" stroke-width="0.25">15:44:00</text>
<text x="1421.39" y="603.1" font-size="9.9" text-anchor="middle" letter-spacing="-0.36" fill="#ccccdc" stroke="#ccccdc" stroke-width="0.25">15:45:00</text>
<text x="1471.48" y="603.1" font-size="9.9" text-anchor="middle" letter-spacing="-0.36" fill="#ccccdc" stroke="#ccccdc" stroke-width="0.25">15:46:00</text>
<text x="1521.57" y="603.1" font-size="9.9" text-anchor="middle" letter-spacing="-0.36" fill="#ccccdc" stroke="#ccccdc" stroke-width="0.25">15:47:00</text>
<text x="1571.66" y="603.1" font-size="9.9" text-anchor="middle" letter-spacing="-0.36" fill="#ccccdc" stroke="#ccccdc" stroke-width="0.25">15:48:00</text>
</g>
<text x="828.5" y="615.8" font-size="9.2" fill="#6e9fff" stroke="#6e9fff" stroke-width="0.25">Name</text>
<rect x="807.3" y="621.1" width="774.0" height="1" fill="rgba(204,204,220,0.10)"/>
<rect x="807.3" y="637.6" width="774.0" height="1" fill="rgba(204,204,220,0.10)"/>
<rect x="813.5" y="628.2" width="9.7" height="3.2" rx="1.6" fill="#73bf69"/>
<text x="828.5" y="632.2" font-size="9.2" fill="#ccccdc" stroke="#ccccdc" stroke-width="0.25">requests US</text>
</svg>
<svg style="position:absolute;left:0px;top:650px" width="200" height="25" viewBox="0 650 200 25">
<path d="M15.8 660 l2.4 2.4 l2.4 -2.4" stroke="#ccccdc" stroke-width="1.2" fill="none"/>
<text x="29.7" y="665.7" font-size="11.5" font-weight="700" fill="#ccccdc">Details</text>
</svg>
<div class="panel" style="left:8px;top:677.7px;width:787.5px;height:200px"></div>
<svg style="position:absolute;left:8px;top:677px" width="787.5" height="190" viewBox="8 677 787.5 190">
<text x="14.9" y="692.9" font-size="10" font-weight="700" fill="#ccccdc">Top 10 slowest routes</text>
<text x="18.7" y="719.6" font-size="10" font-weight="700" fill="#ccccdc">path_group</text>
<text x="317" y="719.6" font-size="10" font-weight="700" text-anchor="end" fill="#ccccdc">requests</text>
<text x="472" y="719.6" font-size="10" font-weight="700" text-anchor="end" fill="#ccccdc">avg_ms</text>
<text x="626.6" y="719.6" font-size="10" font-weight="700" text-anchor="end" fill="#ccccdc">p95_ms</text>
<text x="781.6" y="719.6" font-size="10" font-weight="700" text-anchor="end" fill="#ccccdc">max_ms</text>
<rect x="14.9" y="725.90" width="773.8" height="1" fill="rgba(204,204,220,0.10)"/>
<rect x="14.9" y="751.22" width="773.8" height="1" fill="rgba(204,204,220,0.10)"/>
<rect x="14.9" y="776.54" width="773.8" height="1" fill="rgba(204,204,220,0.10)"/>
<rect x="168.5" y="726.40" width="1" height="75.96" fill="rgba(204,204,220,0.10)"/>
<rect x="324.0" y="726.40" width="1" height="75.96" fill="rgba(204,204,220,0.10)"/>
<rect x="478.9" y="726.40" width="1" height="75.96" fill="rgba(204,204,220,0.10)"/>
<rect x="633.0" y="726.40" width="1" height="75.96" fill="rgba(204,204,220,0.10)"/>
<text x="18.7" y="743.4" font-size="11" fill="#ccccdc" stroke="#ccccdc" stroke-width="0.25">/status/:id</text>
<text x="319.3" y="743.4" font-size="11" text-anchor="end" fill="#ccccdc" stroke="#ccccdc" stroke-width="0.25">8</text>
<text x="474.3" y="743.4" font-size="11" text-anchor="end" fill="#ccccdc" stroke="#ccccdc" stroke-width="0.25">1</text>
<text x="629.2" y="743.4" font-size="11" text-anchor="end" fill="#ccccdc" stroke="#ccccdc" stroke-width="0.25">2</text>
<text x="784.6" y="743.4" font-size="11" text-anchor="end" fill="#ccccdc" stroke="#ccccdc" stroke-width="0.25">2</text>
<text x="18.7" y="768.72" font-size="11" fill="#ccccdc" stroke="#ccccdc" stroke-width="0.25">/anything</text>
<text x="319.3" y="768.72" font-size="11" text-anchor="end" fill="#ccccdc" stroke="#ccccdc" stroke-width="0.25">22</text>
<text x="474.3" y="768.72" font-size="11" text-anchor="end" fill="#ccccdc" stroke="#ccccdc" stroke-width="0.25">0.600</text>
<text x="629.2" y="768.72" font-size="11" text-anchor="end" fill="#ccccdc" stroke="#ccccdc" stroke-width="0.25">1.40</text>
<text x="784.6" y="768.72" font-size="11" text-anchor="end" fill="#ccccdc" stroke="#ccccdc" stroke-width="0.25">3</text>
<text x="18.7" y="794.04" font-size="11" fill="#ccccdc" stroke="#ccccdc" stroke-width="0.25">/test</text>
<text x="319.3" y="794.04" font-size="11" text-anchor="end" fill="#ccccdc" stroke="#ccccdc" stroke-width="0.25">1</text>
<text x="474.3" y="794.04" font-size="11" text-anchor="end" fill="#ccccdc" stroke="#ccccdc" stroke-width="0.25">1</text>
<text x="629.2" y="794.04" font-size="11" text-anchor="end" fill="#ccccdc" stroke="#ccccdc" stroke-width="0.25">1</text>
<text x="784.6" y="794.04" font-size="11" text-anchor="end" fill="#ccccdc" stroke="#ccccdc" stroke-width="0.25">1</text>
</svg>
<div class="panel" style="left:801px;top:677.7px;width:787.5px;height:200px"></div>
<svg style="position:absolute;left:801px;top:677px" width="787.5" height="190" viewBox="801 677 787.5 190">
<text x="807.3" y="692.9" font-size="10" font-weight="700" fill="#ccccdc">Recent errors</text>
<clipPath id="tbcl"><rect x="801" y="677" width="781" height="200"/></clipPath><g clip-path="url(#tbcl)">
<text x="811.6" y="719.6" font-size="10" font-weight="700" fill="#ccccdc">ts</text>
<text x="1012.2" y="719.6" font-size="10" font-weight="700" text-anchor="end" fill="#ccccdc">http_status</text>
<text x="1023.7" y="719.6" font-size="10" font-weight="700" fill="#ccccdc">colo</text>
<text x="1129.7" y="719.6" font-size="10" font-weight="700" fill="#ccccdc">country</text>
<text x="1235.5" y="719.6" font-size="10" font-weight="700" fill="#ccccdc">http_method</text>
<text x="1341.4" y="719.6" font-size="10" font-weight="700" fill="#ccccdc">full_path</text>
<text x="1541.9" y="719.6" font-size="10" font-weight="700" text-anchor="end" fill="#ccccdc">latency_ms</text>
<text x="1553.4" y="719.6" font-size="10" font-weight="700" fill="#ccccdc">cf_ray</text>
</g>
<rect x="807.3" y="725.90" width="774.3" height="1" fill="rgba(204,204,220,0.10)"/>
<rect x="807.3" y="751.22" width="774.3" height="1" fill="rgba(204,204,220,0.10)"/>
<rect x="807.3" y="776.54" width="774.3" height="1" fill="rgba(204,204,220,0.10)"/>
<rect x="807.3" y="801.86" width="774.3" height="1" fill="rgba(204,204,220,0.10)"/>
<rect x="807.3" y="827.18" width="774.3" height="1" fill="rgba(204,204,220,0.10)"/>
<rect x="807.3" y="852.50" width="774.3" height="1" fill="rgba(204,204,220,0.10)"/>
<rect x="912.8" y="726.40" width="1" height="200" fill="rgba(204,204,220,0.10)"/>
<rect x="1018.8" y="726.40" width="1" height="200" fill="rgba(204,204,220,0.10)"/>
<rect x="1124.8" y="726.40" width="1" height="200" fill="rgba(204,204,220,0.10)"/>
<rect x="1231.1" y="726.40" width="1" height="200" fill="rgba(204,204,220,0.10)"/>
<rect x="1336.8" y="726.40" width="1" height="200" fill="rgba(204,204,220,0.10)"/>
<rect x="1442.8" y="726.40" width="1" height="200" fill="rgba(204,204,220,0.10)"/>
<rect x="1549.1" y="726.40" width="1" height="200" fill="rgba(204,204,220,0.10)"/>
<text x="811.6" y="743.4" font-size="11" fill="#ccccdc" stroke="#ccccdc" stroke-width="0.25">2026-04-22 15:48:01</text>
<text x="1014.5" y="743.4" font-size="11" text-anchor="end" fill="#ccccdc" stroke="#ccccdc" stroke-width="0.25">500</text>
<text x="1023.7" y="743.4" font-size="11" fill="#ccccdc" stroke="#ccccdc" stroke-width="0.25">LAX</text>
<text x="1129.7" y="743.4" font-size="11" fill="#ccccdc" stroke="#ccccdc" stroke-width="0.25">US</text>
<text x="1235.5" y="743.4" font-size="11" fill="#ccccdc" stroke="#ccccdc" stroke-width="0.25">GET</text>
<text x="1341.4" y="743.4" font-size="11" fill="#ccccdc" stroke="#ccccdc" stroke-width="0.25">/status/500</text>
<text x="1544.5" y="743.4" font-size="11" text-anchor="end" fill="#ccccdc" stroke="#ccccdc" stroke-width="0.25">0</text>
<text x="811.6" y="768.72" font-size="11" fill="#ccccdc" stroke="#ccccdc" stroke-width="0.25">2026-04-22 15:48:01</text>
<text x="1014.5" y="768.72" font-size="11" text-anchor="end" fill="#ccccdc" stroke="#ccccdc" stroke-width="0.25">500</text>
<text x="1023.7" y="768.72" font-size="11" fill="#ccccdc" stroke="#ccccdc" stroke-width="0.25">LAX</text>
<text x="1129.7" y="768.72" font-size="11" fill="#ccccdc" stroke="#ccccdc" stroke-width="0.25">US</text>
<text x="1235.5" y="768.72" font-size="11" fill="#ccccdc" stroke="#ccccdc" stroke-width="0.25">GET</text>
<text x="1341.4" y="768.72" font-size="11" fill="#ccccdc" stroke="#ccccdc" stroke-width="0.25">/status/500</text>
<text x="1544.5" y="768.72" font-size="11" text-anchor="end" fill="#ccccdc" stroke="#ccccdc" stroke-width="0.25">1</text>
<text x="811.6" y="794.04" font-size="11" fill="#ccccdc" stroke="#ccccdc" stroke-width="0.25">2026-04-22 15:48:01</text>
<text x="1014.5" y="794.04" font-size="11" text-anchor="end" fill="#ccccdc" stroke="#ccccdc" stroke-width="0.25">500</text>
<text x="1023.7" y="794.04" font-size="11" fill="#ccccdc" stroke="#ccccdc" stroke-width="0.25">LAX</text>
<text x="1129.7" y="794.04" font-size="11" fill="#ccccdc" stroke="#ccccdc" stroke-width="0.25">US</text>
<text x="1235.5" y="794.04" font-size="11" fill="#ccccdc" stroke="#ccccdc" stroke-width="0.25">GET</text>
<text x="1341.4" y="794.04" font-size="11" fill="#ccccdc" stroke="#ccccdc" stroke-width="0.25">/status/500</text>
<text x="1544.5" y="794.04" font-size="11" text-anchor="end" fill="#ccccdc" stroke="#ccccdc" stroke-width="0.25">2</text>
<text x="811.6" y="819.36" font-size="11" fill="#ccccdc" stroke="#ccccdc" stroke-width="0.25">2026-04-22 15:47:53</text>
<text x="1014.5" y="819.36" font-size="11" text-anchor="end" fill="#ccccdc" stroke="#ccccdc" stroke-width="0.25">404</text>
<text x="1023.7" y="819.36" font-size="11" fill="#ccccdc" stroke="#ccccdc" stroke-width="0.25">LAX</text>
<text x="1129.7" y="819.36" font-size="11" fill="#ccccdc" stroke="#ccccdc" stroke-width="0.25">US</text>
<text x="1235.5" y="819.36" font-size="11" fill="#ccccdc" stroke="#ccccdc" stroke-width="0.25">GET</text>
<text x="1341.4" y="819.36" font-size="11" fill="#ccccdc" stroke="#ccccdc" stroke-width="0.25">/status/404</text>
<text x="1544.5" y="819.36" font-size="11" text-anchor="end" fill="#ccccdc" stroke="#ccccdc" stroke-width="0.25">1</text>
<text x="811.6" y="844.68" font-size="11" fill="#ccccdc" stroke="#ccccdc" stroke-width="0.25">2026-04-22 15:47:53</text>
<text x="1014.5" y="844.68" font-size="11" text-anchor="end" fill="#ccccdc" stroke="#ccccdc" stroke-width="0.25">404</text>
<text x="1023.7" y="844.68" font-size="11" fill="#ccccdc" stroke="#ccccdc" stroke-width="0.25">LAX</text>
<text x="1129.7" y="844.68" font-size="11" fill="#ccccdc" stroke="#ccccdc" stroke-width="0.25">US</text>
<text x="1235.5" y="844.68" font-size="11" fill="#ccccdc" stroke="#ccccdc" stroke-width="0.25">GET</text>
<text x="1341.4" y="844.68" font-size="11" fill="#ccccdc" stroke="#ccccdc" stroke-width="0.25">/status/404</text>
<text x="1544.5" y="844.68" font-size="11" text-anchor="end" fill="#ccccdc" stroke="#ccccdc" stroke-width="0.25">1</text>
<text x="811.6" y="870.0" font-size="11" fill="#ccccdc" stroke="#ccccdc" stroke-width="0.25">2026-04-22 15:47:53</text>
<text x="1014.5" y="870.0" font-size="11" text-anchor="end" fill="#ccccdc" stroke="#ccccdc" stroke-width="0.25">404</text>
<text x="1023.7" y="870.0" font-size="11" fill="#ccccdc" stroke="#ccccdc" stroke-width="0.25">LAX</text>
<text x="1129.7" y="870.0" font-size="11" fill="#ccccdc" stroke="#ccccdc" stroke-width="0.25">US</text>
<text x="1235.5" y="870.0" font-size="11" fill="#ccccdc" stroke="#ccccdc" stroke-width="0.25">GET</text>
<text x="1341.4" y="870.0" font-size="11" fill="#ccccdc" stroke="#ccccdc" stroke-width="0.25">/status/404</text>
<text x="1544.5" y="870.0" font-size="11" text-anchor="end" fill="#ccccdc" stroke="#ccccdc" stroke-width="0.25">1</text>
</svg>
<svg style="position:absolute;left:0;top:0" width="1600" height="867" viewBox="0 0 1600 867">
<path d="M-20 -20 H1620 V887 H-20 Z M-3 -20 V857 A10 10 0 0 0 7 867 H1589.5 A10 10 0 0 0 1599.6 857 V-20 Z" fill="#060709" fill-rule="evenodd"/>
<path d="M-3 857 A10 10 0 0 0 7 866.5 H1589.5 A9.6 9.6 0 0 0 1599.1 857 V0" stroke="rgba(204,204,220,0.13)" stroke-width="1" fill="none"/>
</svg>
</body></html>
